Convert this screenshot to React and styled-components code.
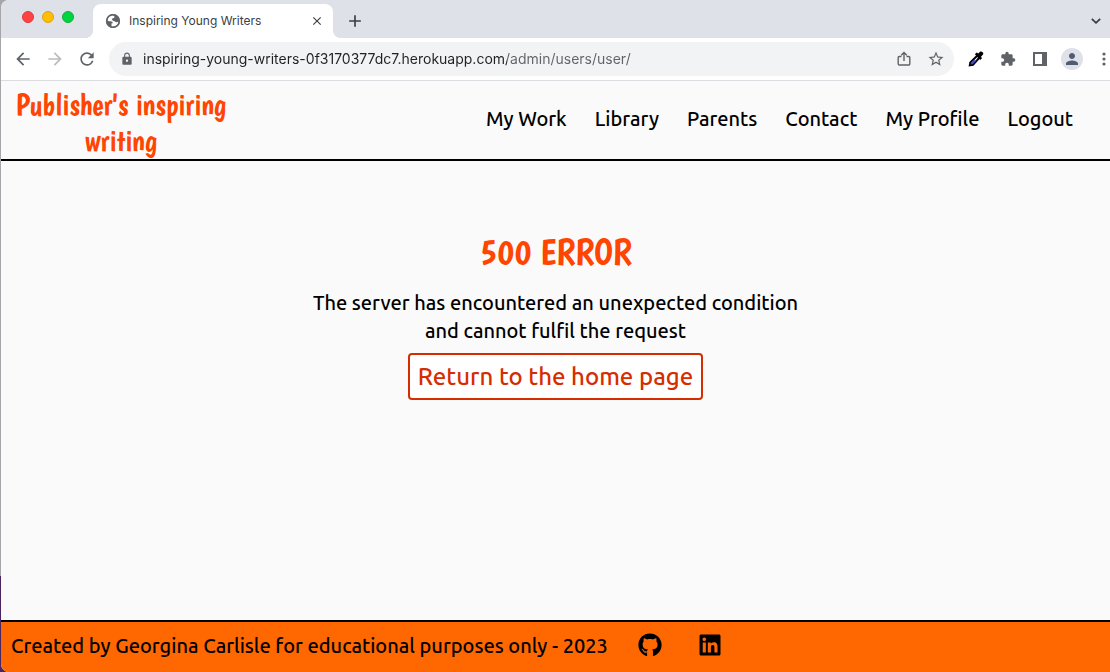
import React from 'react';
import styled, { createGlobalStyle } from 'styled-components';
import {
  MdArrowBack, MdArrowForward, MdRefresh, MdLock, MdClose, MdAdd,
  MdStarBorder, MdExtension, MdPerson,
} from 'react-icons/md';
import { FaGithub, FaLinkedin } from 'react-icons/fa';

const GlobalStyle = createGlobalStyle`
  *, *::before, *::after { box-sizing: border-box; }
  body {
    margin: 0;
    background: linear-gradient(#a5a5aa 576px, #4b2560 576px);
    font-family: Ubuntu, "Noto Sans", sans-serif;
    font-weight: 500;
    color: #000;
  }
`;

const BrowserWindow = styled.div`
  display: flex;
  flex-direction: column;
  min-height: 100vh;
  margin-left: 1px;
  border-radius: 8px 0 0 8px;
  overflow: hidden;
  background: #fafafa;
`;

const TabStrip = styled.div`
  display: flex;
  align-items: flex-end;
  height: 38px;
  background: #dee1e8;
`;

const WindowControls = styled.div`
  display: flex;
  align-self: center;
  gap: 8px;
  width: 92px;
  padding: 0 0 4px 21px;
`;

const ControlDot = styled.button`
  width: 12px;
  height: 12px;
  padding: 0;
  border: 1px solid ${(p) => p.$edge};
  border-radius: 50%;
  background: ${(p) => p.$fill};
`;

const Tab = styled.div`
  position: relative;
  display: flex;
  align-items: center;
  gap: 8px;
  width: 240px;
  height: 34px;
  padding: 0 8px 0 12px;
  border-radius: 8px 8px 0 0;
  background: #fff;
  color: #3c4043;
  font: 12px/16px Inter, sans-serif;

  &::before, &::after {
    content: "";
    position: absolute;
    bottom: 0;
    width: 8px;
    height: 8px;
  }
  &::before {
    right: 100%;
    background: radial-gradient(circle at 0 0, transparent 8px, #fff 8px);
  }
  &::after {
    left: 100%;
    background: radial-gradient(circle at 100% 0, transparent 8px, #fff 8px);
  }
`;

const TabTitle = styled.span`
  flex: 1;
  white-space: nowrap;
`;

const IconButton = styled.button`
  display: flex;
  flex: none;
  align-items: center;
  justify-content: center;
  width: ${(p) => p.$width || 32}px;
  height: ${(p) => p.$height || 32}px;
  padding: 0;
  border: 0;
  background: none;
  color: ${(p) => p.$color || '#5f6368'};
`;

const NewTab = styled(IconButton)`
  align-self: center;
  margin: 4px auto 0 6px;
`;

const TabSearch = styled(IconButton)`
  align-self: center;
  margin-top: 4px;
`;

const Toolbar = styled.div`
  display: flex;
  align-items: center;
  height: 43px;
  padding-left: 6px;
  border-bottom: 1px solid #dadce0;
  background: #fff;
`;

const AddressBar = styled.label`
  display: flex;
  flex: 1;
  align-items: center;
  min-width: 0;
  height: 34px;
  margin: 0 6px;
  padding: 0 2px 0 11px;
  border-radius: 17px;
  background: #f1f3f4;
  color: #5f6368;
`;

const AddressInput = styled.input`
  flex: 1;
  min-width: 0;
  margin-left: 9px;
  padding: 0;
  border: 0;
  outline: 0;
  background: linear-gradient(to right, #202124 364px, #5f6368 364px);
  background-clip: text;
  color: #202124;
  -webkit-text-fill-color: transparent;
  font: 14px/20px Inter, sans-serif;
`;

const Avatar = styled.span`
  display: flex;
  align-items: center;
  justify-content: center;
  width: 22px;
  height: 22px;
  border-radius: 50%;
  background: #dee1e8;
  color: #505c73;
`;

const MenuButton = styled(IconButton)`
  justify-content: flex-end;
  padding-right: 4px;
`;

const SiteHeader = styled.header`
  display: flex;
  align-items: center;
  justify-content: space-between;
  min-height: 80px;
  padding-right: 37px;
  border-bottom: 2px solid #000;
`;

const Brand = styled.a`
  width: 240px;
  padding-top: 6px;
  color: #ff4500;
  font: 30px/36px Boogaloo, "Liberation Sans Narrow", "Open Sans", sans-serif;
  text-align: center;
  text-decoration: none;
`;

const Nav = styled.nav`
  display: flex;
  gap: 28px;
  padding-bottom: 2px;
`;

const NavLink = styled.a`
  color: #000;
  font-size: 20px;
  line-height: 28px;
  text-decoration: none;
  white-space: nowrap;
`;

const Main = styled.main`
  display: flex;
  flex: 1;
  flex-direction: column;
  align-items: center;
  padding-top: 67px;
`;

const Title = styled.h1`
  margin: 0 0 13px;
  color: #ff4500;
  font: 36px/48px Boogaloo, "Liberation Sans Narrow", "Open Sans", sans-serif;
`;

const Message = styled.p`
  max-width: 520px;
  margin: 0 0 8px;
  font-size: 20px;
  line-height: 28px;
  text-align: center;
`;

const HomeLink = styled.a`
  padding: 6px 8px 5px;
  border: 2px solid #d62d00;
  border-radius: 4px;
  background: #fff;
  color: #d62d00;
  font-size: 24px;
  line-height: 32px;
  text-decoration: none;
`;

const SiteFooter = styled.footer`
  display: flex;
  align-items: center;
  min-height: 52px;
  padding: 0 10px 2px;
  border-top: 2px solid #000;
  background: #ff6700;
  font-size: 20px;
  line-height: 28px;
`;

const SocialLinks = styled.div`
  display: flex;
  gap: 36px;
  margin-left: 30px;
  padding-bottom: 2px;
`;

const SocialLink = styled.a`
  display: flex;
  color: #000;
`;

const pages = ['My Work', 'Library', 'Parents', 'Contact', 'My Profile', 'Logout'];

function GlobeIcon() {
  return (
    <svg width="16" height="16" viewBox="0 0 16 16">
      <circle cx="8" cy="8" r="7" fill="#5f6368" />
      <path fill="#fff" d="M8 2.300C5 2.300 2.800 4.300 2.400 7.200c.8 1 2 1.100 3.100 1.100 1.600 0 2.300.8 2.300 2H6.500v3.200c3.400.9 6.700-1.500 7.100-4.900-.7.500-1.300.6-2.100.6-1.200 0-1.500-.8-2.600-1.200-1.500-.4-2-1-1.800-2 .2-.9 1.100-1.100 2.200-1.100V3.300Z" />
      <circle cx="8" cy="8" r="6.300" fill="none" stroke="#5f6368" strokeWidth="1.400" />
    </svg>
  );
}

function ShareIcon() {
  return (
    <svg width="14" height="16" viewBox="0 0 14 16" fill="none" stroke="currentColor" strokeWidth="1.4">
      <path d="M4.5 5.5H2.2a1 1 0 0 0-1 1v6.3a1.2 1.2 0 0 0 1.2 1.2h9.2a1.2 1.2 0 0 0 1.2-1.2V6.500a1 1 0 0 0-1-1H9.500M7 10V1.600M4.200 4.200 7 1.400l2.800 2.800" />
    </svg>
  );
}

function DropperIcon() {
  return (
    <svg width="16" height="16" viewBox="0 0 16 16">
      <path d="M9.500 4.500 11.500 6.500 5 13.800 1.800 14.300 2.300 11.500Z" fill="#fff" stroke="#000" strokeWidth="2" />
      <path d="M5.200 9.300h3.600L4.700 13.300 2.500 13.600 2.800 12Z" fill="#4545d6" />
      <path d="M6.900 3.300 8.700 1.500l1.500 1.100L12 .8C13.500-.4 16.200 1.600 15 3.600l-2 2.200 1 1.500-1.800 1.800Z" fill="#000" />
    </svg>
  );
}

function PanelIcon() {
  return (
    <svg width="14" height="14" viewBox="0 0 14 14">
      <path fill="currentColor" fillRule="evenodd" d="M0 0h14v14H0ZM2 2v10h7V2Z" />
    </svg>
  );
}

function ChevronIcon() {
  return (
    <svg width="10" height="6" viewBox="0 0 10 6" fill="none" stroke="currentColor" strokeWidth="1.800">
      <path d="m.8.8 4.200 4 4.200-4" />
    </svg>
  );
}

function MenuDots() {
  return (
    <svg width="4" height="14" viewBox="0 0 4 14" fill="currentColor">
      <circle cx="2" cy="2" r="1.600" />
      <circle cx="2" cy="7" r="1.600" />
      <circle cx="2" cy="12" r="1.600" />
    </svg>
  );
}

export default function App() {
  return (
    <>
      <GlobalStyle />
      <BrowserWindow>
        <TabStrip>
          <WindowControls>
            <ControlDot aria-label="Close window" $fill="#ff4245" $edge="#e2353a" />
            <ControlDot aria-label="Minimise window" $fill="#ffbd03" $edge="#dfa111" />
            <ControlDot aria-label="Zoom window" $fill="#00d441" $edge="#10b038" />
          </WindowControls>
          <Tab>
            <GlobeIcon />
            <TabTitle>Inspiring Young Writers</TabTitle>
            <IconButton aria-label="Close tab" $width={16} $height={16} $color="#3c4043">
              <MdClose size={14} />
            </IconButton>
          </Tab>
          <NewTab aria-label="New tab" $color="#3c4043"><MdAdd size={20} /></NewTab>
          <TabSearch aria-label="Search tabs" $width={28} $color="#3c4043"><ChevronIcon /></TabSearch>
        </TabStrip>
        <Toolbar>
          <IconButton aria-label="Back"><MdArrowBack size={20} /></IconButton>
          <IconButton aria-label="Forward" $color="#babcbe"><MdArrowForward size={20} /></IconButton>
          <IconButton aria-label="Reload"><MdRefresh size={20} /></IconButton>
          <AddressBar>
            <MdLock size={14} />
            <AddressInput
              aria-label="Address"
              type="text"
              defaultValue="inspiring-young-writers-0f3170377dc7.herokuapp.com/admin/users/user/"
            />
            <IconButton aria-label="Share"><ShareIcon /></IconButton>
            <IconButton aria-label="Bookmark"><MdStarBorder size={18} /></IconButton>
          </AddressBar>
          <IconButton aria-label="Colour picker"><DropperIcon /></IconButton>
          <IconButton aria-label="Extensions"><MdExtension size={16} /></IconButton>
          <IconButton aria-label="Side panel"><PanelIcon /></IconButton>
          <IconButton aria-label="Profile"><Avatar><MdPerson size={18} /></Avatar></IconButton>
          <MenuButton aria-label="Menu" $width={22}><MenuDots /></MenuButton>
        </Toolbar>
        <SiteHeader>
          <Brand href="#home">Publisher's inspiring writing</Brand>
          <Nav>
            {pages.map((page) => <NavLink key={page} href="#page">{page}</NavLink>)}
          </Nav>
        </SiteHeader>
        <Main>
          <Title>500 ERROR</Title>
          <Message>
            The server has encountered an unexpected condition
            <br />
            and cannot fulfil the request
          </Message>
          <HomeLink href="#home">Return to the home page</HomeLink>
        </Main>
        <SiteFooter>
          <span>Created by Georgina Carlisle for educational purposes only - 2023</span>
          <SocialLinks>
            <SocialLink href="#github" aria-label="GitHub"><FaGithub size={24} /></SocialLink>
            <SocialLink href="#linkedin" aria-label="LinkedIn"><FaLinkedin size={24} /></SocialLink>
          </SocialLinks>
        </SiteFooter>
      </BrowserWindow>
    </>
  );
}
